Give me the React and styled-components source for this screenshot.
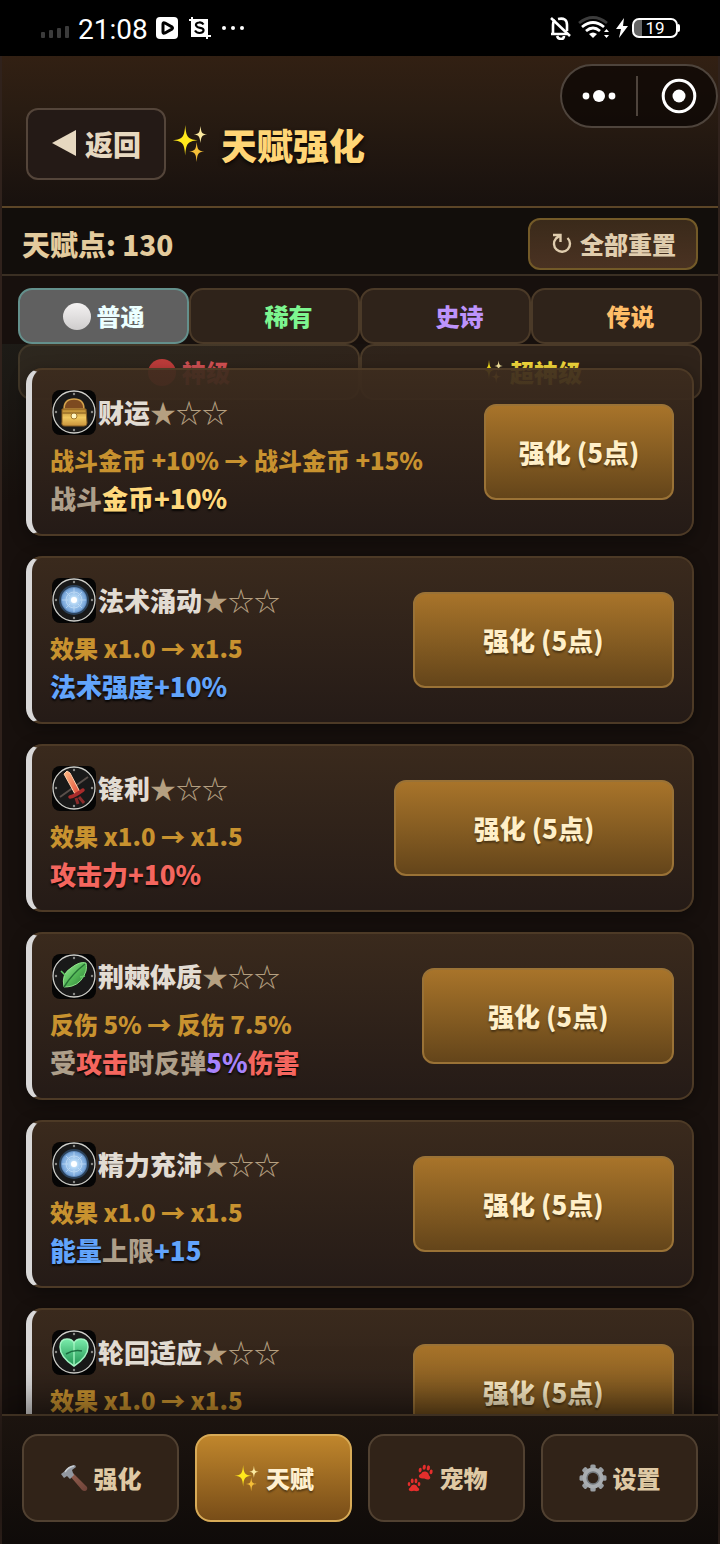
import React, { useState } from "react";
import styled, { createGlobalStyle, css } from "styled-components";

const GlobalStyle = createGlobalStyle`
  *, *::before, *::after { box-sizing: border-box; }
  body {
    margin: 0;
    background: #000;
    font-family: "Noto Sans CJK SC", "Noto Sans", sans-serif;
    font-weight: 900;
  }
  button { font: inherit; color: inherit; cursor: pointer; margin: 0; }
  h1, h2, p, ul { margin: 0; padding: 0; font-weight: inherit; }
  svg { display: block; flex: none; }
`;

/* ---------- page frame ---------- */

const Screen = styled.div`
  display: flex;
  flex-direction: column;
  height: 100vh;
`;

const StatusBar = styled.div`
  flex: none;
  display: flex;
  justify-content: space-between;
  align-items: center;
  height: 56px;
  padding: 0 42px 0 40px;
  background: #000;
  color: #fff;
  font-family: Roboto, sans-serif;
  font-weight: 400;
`;

const StatusGroup = styled.div`
  display: flex;
  align-items: center;
  gap: ${(p) => p.$gap}px;
`;

const Clock = styled.span`
  font-size: 28px;
  line-height: 32px;
  padding-top: 4px;
`;

const Battery = styled.span`
  position: relative;
  display: flex;
  align-items: center;
  justify-content: center;
  width: 46px;
  height: 20px;
  border: 2px solid #fff;
  border-radius: 7px;
  background: linear-gradient(90deg, #666 8px, transparent 8px);
  font-size: 17px;
  line-height: 17px;

  &::after {
    content: "";
    position: absolute;
    right: -4px;
    top: 4px;
    width: 2px;
    height: 8px;
    border-radius: 0 2px 2px 0;
    background: #fff;
  }
`;

const Game = styled.div`
  position: relative;
  flex: 1;
  min-height: 0;
  display: flex;
  flex-direction: column;
  border: solid #30221c;
  border-width: 0 2px;
  background: #17100d;
`;

const Header = styled.header`
  flex: none;
  display: flex;
  align-items: center;
  gap: 5px;
  padding: 52px 24px 26px;
  border-bottom: 2px solid #5c4527;
  background: linear-gradient(#322013, #291c12 35%, #18110e);
`;

const BackButton = styled.button`
  display: flex;
  align-items: center;
  gap: 8px;
  height: 72px;
  padding: 0 23px 0 24px;
  border: 2px solid #54453a;
  border-radius: 12px;
  background: #241a16;
  color: #e6d8c0;
  font-size: 28px;
  line-height: 40px;
`;

const Title = styled.h1`
  display: flex;
  align-items: center;
  gap: 12px;
  color: #ffd576;
  font-size: 36px;
  line-height: 52px;
  text-shadow: 0 2px 4px rgba(0, 0, 0, 0.8);
`;

const Capsule = styled.div`
  position: absolute;
  top: 8px;
  right: 0;
  display: flex;
  align-items: center;
  width: 158px;
  height: 64px;
  border: 2px solid #4e443c;
  border-radius: 32px;
  background: rgba(12, 7, 4, 0.75);
`;

const CapsuleButton = styled.button`
  flex: 1;
  display: flex;
  align-items: center;
  justify-content: center;
  height: 40px;
  padding: 0;
  border: 0;
  background: none;

  & + & {
    padding-left: 4px;
    border-left: 2px solid #4e443c;
  }
`;

const PointsBar = styled.section`
  flex: none;
  display: flex;
  align-items: center;
  justify-content: space-between;
  height: 68px;
  padding: 6px 20px 0;
  border-bottom: 2px solid #3a2f23;
  background: #120e0b;
`;

const Points = styled.p`
  color: #e3cb9d;
  font-size: 28px;
  line-height: 40px;
`;

const ResetButton = styled.button`
  display: flex;
  align-items: center;
  gap: 8px;
  height: 52px;
  padding: 0 20px 0 22px;
  border: 2px solid #735a28;
  border-radius: 12px;
  background: linear-gradient(#3a2a1a, #4a3222);
  color: #e0cdae;
  font-size: 24px;
  line-height: 36px;
`;

/* ---------- rarity tabs ---------- */

const Tabs = styled.nav`
  flex: none;
  display: flex;
  flex-wrap: wrap;
  align-content: flex-start;
  height: 68px;
  padding: 12px 16px 0;
`;

const Tab = styled.button`
  flex: 1 1 ${(p) => (p.$wide ? "50%" : "25%")};
  display: flex;
  align-items: center;
  justify-content: center;
  gap: 6px;
  height: 56px;
  padding: 0;
  border: 2px solid #4b3a28;
  border-radius: 14px;
  background: #2f231a;
  color: ${(p) => p.$color};
  font-size: 24px;
  line-height: 36px;

  ${(p) =>
    p.$active &&
    css`
      border-color: #64908c;
      background: #606060;
    `}
`;

const Dot = styled.span`
  width: ${(p) => (p.$fill ? 28 : 22)}px;
  height: 27px;
  border-radius: 50%;
  background: ${(p) => p.$fill || "none"};
`;

/* ---------- talent list ---------- */

const List = styled.ul`
  position: relative;
  z-index: 1;
  flex: 1;
  min-height: 0;
  display: flex;
  flex-direction: column;
  gap: 20px;
  padding: 24px;
  overflow-y: auto;
  scrollbar-width: none;
  list-style: none;
  background: linear-gradient(160deg, rgba(40, 48, 40, 0.35), transparent 12%);
`;

const Card = styled.li`
  flex: none;
  display: flex;
  align-items: center;
  gap: 20px;
  padding: 16px 18px;
  border: 2px solid #4d3a26;
  border-left: 6px solid #d9d8d8;
  border-radius: 16px;
  background: linear-gradient(rgba(61, 44, 30, 0.93), rgba(37, 27, 23, 0.97));
  background-origin: border-box;
  box-shadow: 0 4px 16px rgba(0, 0, 0, 0.4);
`;

const Info = styled.div`
  flex: 1 1 auto;
  padding-top: 4px;
  white-space: nowrap;
`;

const Name = styled.h2`
  display: flex;
  align-items: center;
  gap: 2px;
  height: 44px;
  margin-bottom: 8px;
  color: #e2dcd3;
  font-size: 26px;
  line-height: 40px;
`;

const Stars = styled.span`
  color: #b5a081;
  font-weight: 400;
`;

const Effect = styled.p`
  color: #c8922f;
  font-size: 24px;
  line-height: 36px;
`;

const Summary = styled.p`
  color: #ae9f8a;
  font-size: 26px;
  line-height: 40px;
`;

const tones = {
  gold: "#ffd87c",
  blue: "#62a4fb",
  red: "#f4665e",
  purple: "#a883fb",
};

const Mark = styled.span`
  color: ${(p) => tones[p.$tone]};
  text-shadow: 0 2px 2px rgba(0, 0, 0, 0.8);
`;

const UpgradeButton = styled.button`
  flex: 1 1 auto;
  height: 96px;
  padding: 0 12px;
  border: 2px solid #9a7236;
  border-radius: 12px;
  background: linear-gradient(#a8742a, #64451a);
  color: #ffefc8;
  font-size: 26px;
  line-height: 40px;
  white-space: nowrap;
  text-shadow: 0 2px 2px rgba(0, 0, 0, 0.4);
`;

/* ---------- bottom navigation ---------- */

const BottomNav = styled.nav`
  position: relative;
  z-index: 2;
  flex: none;
  display: grid;
  grid-template-columns: repeat(4, 1fr);
  gap: 16px;
  padding: 18px 20px 22px;
  border-top: 2px solid #3e3021;
  background: linear-gradient(#1c140f, #0f0b09);
  box-shadow: 0 -8px 40px rgba(0, 0, 0, 0.6);
`;

const NavButton = styled.button`
  display: flex;
  align-items: center;
  justify-content: center;
  gap: 6px;
  height: 88px;
  padding: 0;
  border: 2px solid #514131;
  border-radius: 16px;
  background: #312318;
  color: #dfc9a4;
  font-size: 24px;
  line-height: 36px;

  ${(p) =>
    p.$active &&
    css`
      border-color: #d8ab57;
      background: linear-gradient(#c0862c, #784d18);
      color: #fff0cf;
      text-shadow: 0 2px 2px rgba(0, 0, 0, 0.4);
    `}
`;

/* ---------- drawings ---------- */

const Hidden = styled.svg`
  position: absolute;
`;

const SharedGradients = () => (
  <Hidden width="0" height="0" aria-hidden="true">
    <defs>
      <radialGradient id="orb">
        <stop offset="0" stopColor="#f3fbff" />
        <stop offset=".3" stopColor="#b3d6f5" />
        <stop offset=".8" stopColor="#7ba9dc" />
        <stop offset="1" stopColor="#4a72a4" />
      </radialGradient>
      <linearGradient id="gold" x2="0" y2="1">
        <stop offset="0" stopColor="#b4822b" />
        <stop offset=".5" stopColor="#f0c860" />
        <stop offset="1" stopColor="#c8923b" />
      </linearGradient>
      <linearGradient id="leaf" x2="1" y2="1">
        <stop offset="0" stopColor="#a5efa0" />
        <stop offset=".5" stopColor="#55b957" />
        <stop offset="1" stopColor="#2c7d38" />
      </linearGradient>
      <linearGradient id="heart" x2="0" y2="1">
        <stop offset="0" stopColor="#7aecab" />
        <stop offset="1" stopColor="#219452" />
      </linearGradient>
      <linearGradient id="blade" x2="1" y2="1">
        <stop offset="0" stopColor="#ffbd87" />
        <stop offset="1" stopColor="#e24a36" />
      </linearGradient>
      <linearGradient id="handle" x2="1" y2="1">
        <stop offset="0" stopColor="#93604f" />
        <stop offset="1" stopColor="#6f4238" />
      </linearGradient>
    </defs>
  </Hidden>
);

const talentArt = {
  chest: (
    <>
      <path d="M12 19C12 12 16 9 22 9s10 3 10 10z" fill="#7d4a20" stroke="#d4a24b" strokeWidth="1.5" />
      <path d="M10 19h24l1 14q0 3-3 3H13q-4 0-3-4z" fill="url(#gold)" stroke="#8a6124" />
      <path d="M10 23h24" stroke="#9a6f28" strokeWidth="1.500" fill="none" />
      <circle cx="22" cy="26" r="3" fill="#fff7c4" stroke="#a0762c" />
    </>
  ),
  orb: (
    <>
      <circle cx="22" cy="22" r="14" fill="url(#orb)" stroke="#2c435c" strokeWidth="2" />
      <g fill="none" stroke="#dcefff" opacity=".5">
        <circle cx="22" cy="22" r="8" />
        <path d="M22 10v6M22 28v6M10 22h6M28 22h6M14 14l4 4M26 26l4 4M30 14l-4 4M18 26l-4 4" />
      </g>
      <circle cx="22" cy="22" r="3" fill="#fff" />
    </>
  ),
  sword: (
    <>
      <path d="M8 31L36 11" stroke="#5a4f4a" strokeWidth="2" />
      <path d="M27 31l5 6M24 32l2 6" stroke="#8a2a2a" strokeWidth="3" />
      <path d="M12 8l3-3 3 2 10 19-5 2z" fill="url(#blade)" stroke="#ffcfac" />
      <path d="M18 31q5-1 13-7" fill="none" stroke="#a92b2b" strokeWidth="3.500" strokeLinecap="round" />
    </>
  ),
  leaf: (
    <>
      <path d="M12 33Q9 20 19 14q9-7 15-5 1 3 0 8Q30 29 20 32q-4 1-8 1z" fill="url(#leaf)" stroke="#8fe58b" />
      <path d="M9 17l5 5M33 22l-5 1" fill="none" stroke="#64cc66" strokeWidth="1.500" />
      <path d="M12 33Q20 20 33 10" fill="none" stroke="#257034" strokeWidth="1.500" />
    </>
  ),
  heart: (
    <>
      <path d="M22 36Q8 27 8 17q0-8 7-8 5 0 7 4 2-4 7-4 7 0 7 8 0 10-14 19z" fill="url(#heart)" stroke="#a4f5c4" strokeWidth="1.5" />
      <path d="M22 13v22" stroke="#9bf2bb" strokeWidth="1.5" />
      <path d="M14 24q8-5 16-3" fill="none" stroke="#1d6f42" strokeWidth="1.5" />
    </>
  ),
};

const TalentIcon = ({ name }) => (
  <svg width="46" height="46" viewBox="-2 -1 46 46" aria-hidden="true">
    <rect width="44" height="45" rx="8" fill="#050505" />
    <circle cx="22" cy="22" r="21" fill="#191919" stroke="#cfcfca" strokeWidth="1.3" />
    <circle cx="22" cy="4" r="1.2" fill="#8b8b88" />
    <circle cx="22" cy="40" r="1.2" fill="#8b8b88" />
    <circle cx="40" cy="22" r="1.2" fill="#8b8b88" />
    <circle cx="4" cy="22" r="1.2" fill="#8b8b88" />
    {talentArt[name]}
  </svg>
);

const Sparkles = ({ size }) => (
  <svg width={size} height={size} viewBox="0 0 36 40" aria-hidden="true">
    <path d="M13 0c1 12 2 15 13 16-11 1-12 4-13 16-1-12-2-15-13-16 11-1 12-4 13-16z" fill="#ffe81c" />
    <path d="M29 1c1 7 1 8 7 9-6 1-6 2-7 9-1-7-1-8-7-9 6-1 6-2 7-9z" fill="#fbeaa0" />
    <path d="M25 18c1 8 1 9 8 10-7 1-7 2-8 11-1-9-1-10-8-11 7-1 7-2 8-10z" fill="#f5bf38" />
  </svg>
);

const Hammer = () => (
  <svg width="28" height="28" viewBox="0 0 28 28" aria-hidden="true">
    <path d="M10 12l3-3 14 14q1 3-2 4-2 0-3-1z" fill="url(#handle)" />
    <path d="M1 10l4-3q3-5 10-6l1 2-4 3 1 3 1 2-4 4-3-3-3 2z" fill="#9298a0" />
    <path d="M5 8q3-5 9-6" fill="none" stroke="#c9ced3" strokeWidth="1.5" />
  </svg>
);

const Paw = ({ at }) => (
  <g transform={at}>
    <path d="M0 0q3 0 4 3 3 2 1 4-2 1-5 0-3 1-5 0-2-2 1-4 1-3 4-3z" />
    <ellipse cx="-5.500" cy="-.5" rx="1.500" ry="2.400" />
    <ellipse cx="-2" cy="-4" rx="1.600" ry="2.600" />
    <ellipse cx="2.200" cy="-4" rx="1.600" ry="2.600" />
    <ellipse cx="5.600" cy="-.5" rx="1.500" ry="2.400" />
  </g>
);

const Paws = () => (
  <svg width="28" height="28" viewBox="0 0 28 28" fill="#e52e2c" aria-hidden="true">
    <Paw at="translate(19.500 7.500) rotate(10)" />
    <Paw at="translate(8 20.500) scale(.9)" />
  </svg>
);

const Gear = () => (
  <svg width="28" height="28" viewBox="-14 -14 28 28" aria-hidden="true">
    <g fill="#9a9fa3">
      {[0, 45, 90, 135].map((a) => (
        <rect key={a} x="-2.700" y="-13.500" width="5.400" height="27" rx="1.500" transform={`rotate(${a})`} />
      ))}
    </g>
    <circle r="8" fill="#30261f" stroke="#a9adb0" strokeWidth="5" />
    <circle r="6" fill="#312318" stroke="#73787c" strokeWidth="1.500" />
  </svg>
);

const BackArrow = () => (
  <svg width="25" height="28" viewBox="0 0 25 28" fill="currentColor" aria-hidden="true">
    <path d="M0 13L24 0v26z" />
  </svg>
);

const ResetIcon = () => (
  <svg width="20" height="24" viewBox="0 0 20 24" fill="none" stroke="currentColor" strokeWidth="2.400" aria-hidden="true">
    <path d="M15.500 6a8 8 0 1 1-11.500.500L8 3.500M1 3h7.500v7" />
  </svg>
);

const Signal = () => (
  <svg width="30" height="22" viewBox="0 0 30 22" fill="#3b3b3b" aria-hidden="true">
    <rect x="1" y="15" width="4" height="6" rx="1" />
    <rect x="9" y="13" width="4" height="8" rx="1" />
    <rect x="17" y="11" width="4" height="10" rx="1" />
    <rect x="25" y="9" width="4" height="12" rx="1" />
  </svg>
);

const PlayBadge = () => (
  <svg width="22" height="22" viewBox="0 0 22 22" aria-hidden="true">
    <rect width="22" height="22" rx="4" fill="#fff" />
    <path d="M7 7q0-2 2-1l7 4q1 1 0 2l-7 4q-2 1-2-1z" fill="#fff" stroke="#000" strokeWidth="3" />
  </svg>
);

const CropBadge = () => (
  <svg width="22" height="22" viewBox="0 0 22 22" fill="none" aria-hidden="true">
    <path d="M3 3h15v15H3z" fill="#fff" />
    <path d="M0 3h18v19M3 0v19h19" stroke="#fff" strokeWidth="2" />
    <path d="M14.500 7.500Q13 5 10 5.500 6.500 6 7 8.500 8 10.500 11 10.800q4 .7 3.500 3Q14 16 10.500 16 7.500 16 6 13.500" stroke="#000" strokeWidth="2.200" />
  </svg>
);

const MoreDots = () => (
  <svg width="24" height="22" viewBox="0 0 24 22" fill="#fff" aria-hidden="true">
    <circle cx="2" cy="11" r="2" />
    <circle cx="11" cy="11" r="2" />
    <circle cx="20" cy="11" r="2" />
  </svg>
);

const BellOff = () => (
  <svg width="22" height="24" viewBox="0 0 22 24" fill="none" stroke="#fff" strokeWidth="2.600" aria-hidden="true">
    <path d="M1 18h16M3 18V9q0-3 2-5M8 3q9-2 9 6v6M7 20q1 3 4 3t3-3" />
    <path d="M1 2l19 18" />
  </svg>
);

const Wifi = () => (
  <svg width="32" height="24" viewBox="0 0 32 24" fill="none" stroke="#fff" strokeWidth="2.800" aria-hidden="true">
    <path d="M1 7q14-11 28 0" stroke="#3c3c3c" />
    <path d="M4 11q11-9 22 0M8 15q7-6 14 0" />
    <path d="M11 18q4-3 8 0l-4 4z" fill="#fff" stroke="none" />
    <path d="M26 16l2.500-3 2.500 3zM26 19h5l-2.500 3z" fill="#fff" stroke="none" />
  </svg>
);

const Bolt = () => (
  <svg width="12" height="20" viewBox="0 0 12 20" fill="#fff" aria-hidden="true">
    <path d="M8 0L0 11h5l-2 9 9-12H7z" />
  </svg>
);

const CapsuleDots = () => (
  <svg width="36" height="14" viewBox="0 0 36 14" fill="#fff" aria-hidden="true">
    <circle cx="5" cy="7" r="3.400" />
    <circle cx="18" cy="7" r="6" />
    <circle cx="31" cy="7" r="3.400" />
  </svg>
);

const CapsuleTarget = () => (
  <svg width="36" height="36" viewBox="0 0 36 36" aria-hidden="true">
    <circle cx="18" cy="18" r="15.800" fill="none" stroke="#fff" strokeWidth="3" />
    <circle cx="18" cy="18" r="6.500" fill="#fff" />
  </svg>
);

/* ---------- data ---------- */

const WHITE_DOT = "linear-gradient(#f4f2f2, #cfcdcd)";
const RED_DOT = "#e2403f";

const rarities = [
  { label: "普通", color: "#ecffff", icon: <Dot $fill={WHITE_DOT} /> },
  { label: "稀有", color: "#7df590", icon: <Dot /> },
  { label: "史诗", color: "#bd93fb", icon: <Dot /> },
  { label: "传说", color: "#ffbd68", icon: <Dot /> },
  { label: "神级", color: "#f0585c", icon: <Dot $fill={RED_DOT} />, wide: true },
  { label: "超神级", color: "#f5da3c", icon: <Sparkles size={24} />, wide: true },
];

const talents = [
  { name: "财运", icon: "chest", effect: "战斗金币 +10% → 战斗金币 +15%", summary: [["战斗"], ["金币+10%", "gold"]] },
  { name: "法术涌动", icon: "orb", effect: "效果 x1.0 → x1.5", summary: [["法术强度+10%", "blue"]] },
  { name: "锋利", icon: "sword", effect: "效果 x1.0 → x1.5", summary: [["攻击力+10%", "red"]] },
  {
    name: "荆棘体质",
    icon: "leaf",
    effect: "反伤 5% → 反伤 7.5%",
    summary: [["受"], ["攻击", "red"], ["时反弹"], ["5%", "purple"], ["伤害", "red"]],
  },
  { name: "精力充沛", icon: "orb", effect: "效果 x1.0 → x1.5", summary: [["能量", "blue"], ["上限"], ["+15", "blue"]] },
  { name: "轮回适应", icon: "heart", effect: "效果 x1.0 → x1.5", summary: [] },
];

const pages = [
  { label: "强化", icon: <Hammer /> },
  { label: "天赋", icon: <Sparkles size={27} /> },
  { label: "宠物", icon: <Paws /> },
  { label: "设置", icon: <Gear /> },
];

const TalentCard = ({ talent }) => (
  <Card>
    <Info>
      <Name>
        <TalentIcon name={talent.icon} />
        <span>
          {talent.name}
          <Stars>★☆☆</Stars>
        </span>
      </Name>
      <Effect>{talent.effect}</Effect>
      <Summary>
        {talent.summary.length === 0 && "\u00a0"}
        {talent.summary.map(([text, tone]) =>
          tone ? (
            <Mark key={text} $tone={tone}>
              {text}
            </Mark>
          ) : (
            text
          )
        )}
      </Summary>
    </Info>
    <UpgradeButton type="button">强化 (5点)</UpgradeButton>
  </Card>
);

export default function App() {
  const [rarity, setRarity] = useState("普通");

  return (
    <Screen>
      <GlobalStyle />
      <SharedGradients />
      <StatusBar>
        <StatusGroup $gap={8}>
          <Signal />
          <Clock>21:08</Clock>
          <StatusGroup $gap={11}>
            <PlayBadge />
            <CropBadge />
            <MoreDots />
          </StatusGroup>
        </StatusGroup>
        <StatusGroup $gap={6}>
          <BellOff />
          <Wifi />
          <StatusGroup $gap={4}>
            <Bolt />
            <Battery>19</Battery>
          </StatusGroup>
        </StatusGroup>
      </StatusBar>

      <Game>
        <Header>
          <BackButton type="button">
            <BackArrow />
            返回
          </BackButton>
          <Title>
            <Sparkles size={38} />
            天赋强化
          </Title>
        </Header>
        <Capsule>
          <CapsuleButton type="button" aria-label="更多">
            <CapsuleDots />
          </CapsuleButton>
          <CapsuleButton type="button" aria-label="关闭">
            <CapsuleTarget />
          </CapsuleButton>
        </Capsule>

        <PointsBar>
          <Points>天赋点: 130</Points>
          <ResetButton type="button">
            <ResetIcon />
            全部重置
          </ResetButton>
        </PointsBar>

        <Tabs>
          {rarities.map((r) => (
            <Tab
              key={r.label}
              type="button"
              $color={r.color}
              $wide={r.wide}
              $active={r.label === rarity}
              onClick={() => setRarity(r.label)}
            >
              {r.icon}
              {r.label}
            </Tab>
          ))}
        </Tabs>

        <List>
          {talents.map((t) => (
            <TalentCard key={t.name} talent={t} />
          ))}
        </List>

        <BottomNav>
          {pages.map((p) => (
            <NavButton key={p.label} type="button" $active={p.label === "天赋"}>
              {p.icon}
              {p.label}
            </NavButton>
          ))}
        </BottomNav>
      </Game>
    </Screen>
  );
}
